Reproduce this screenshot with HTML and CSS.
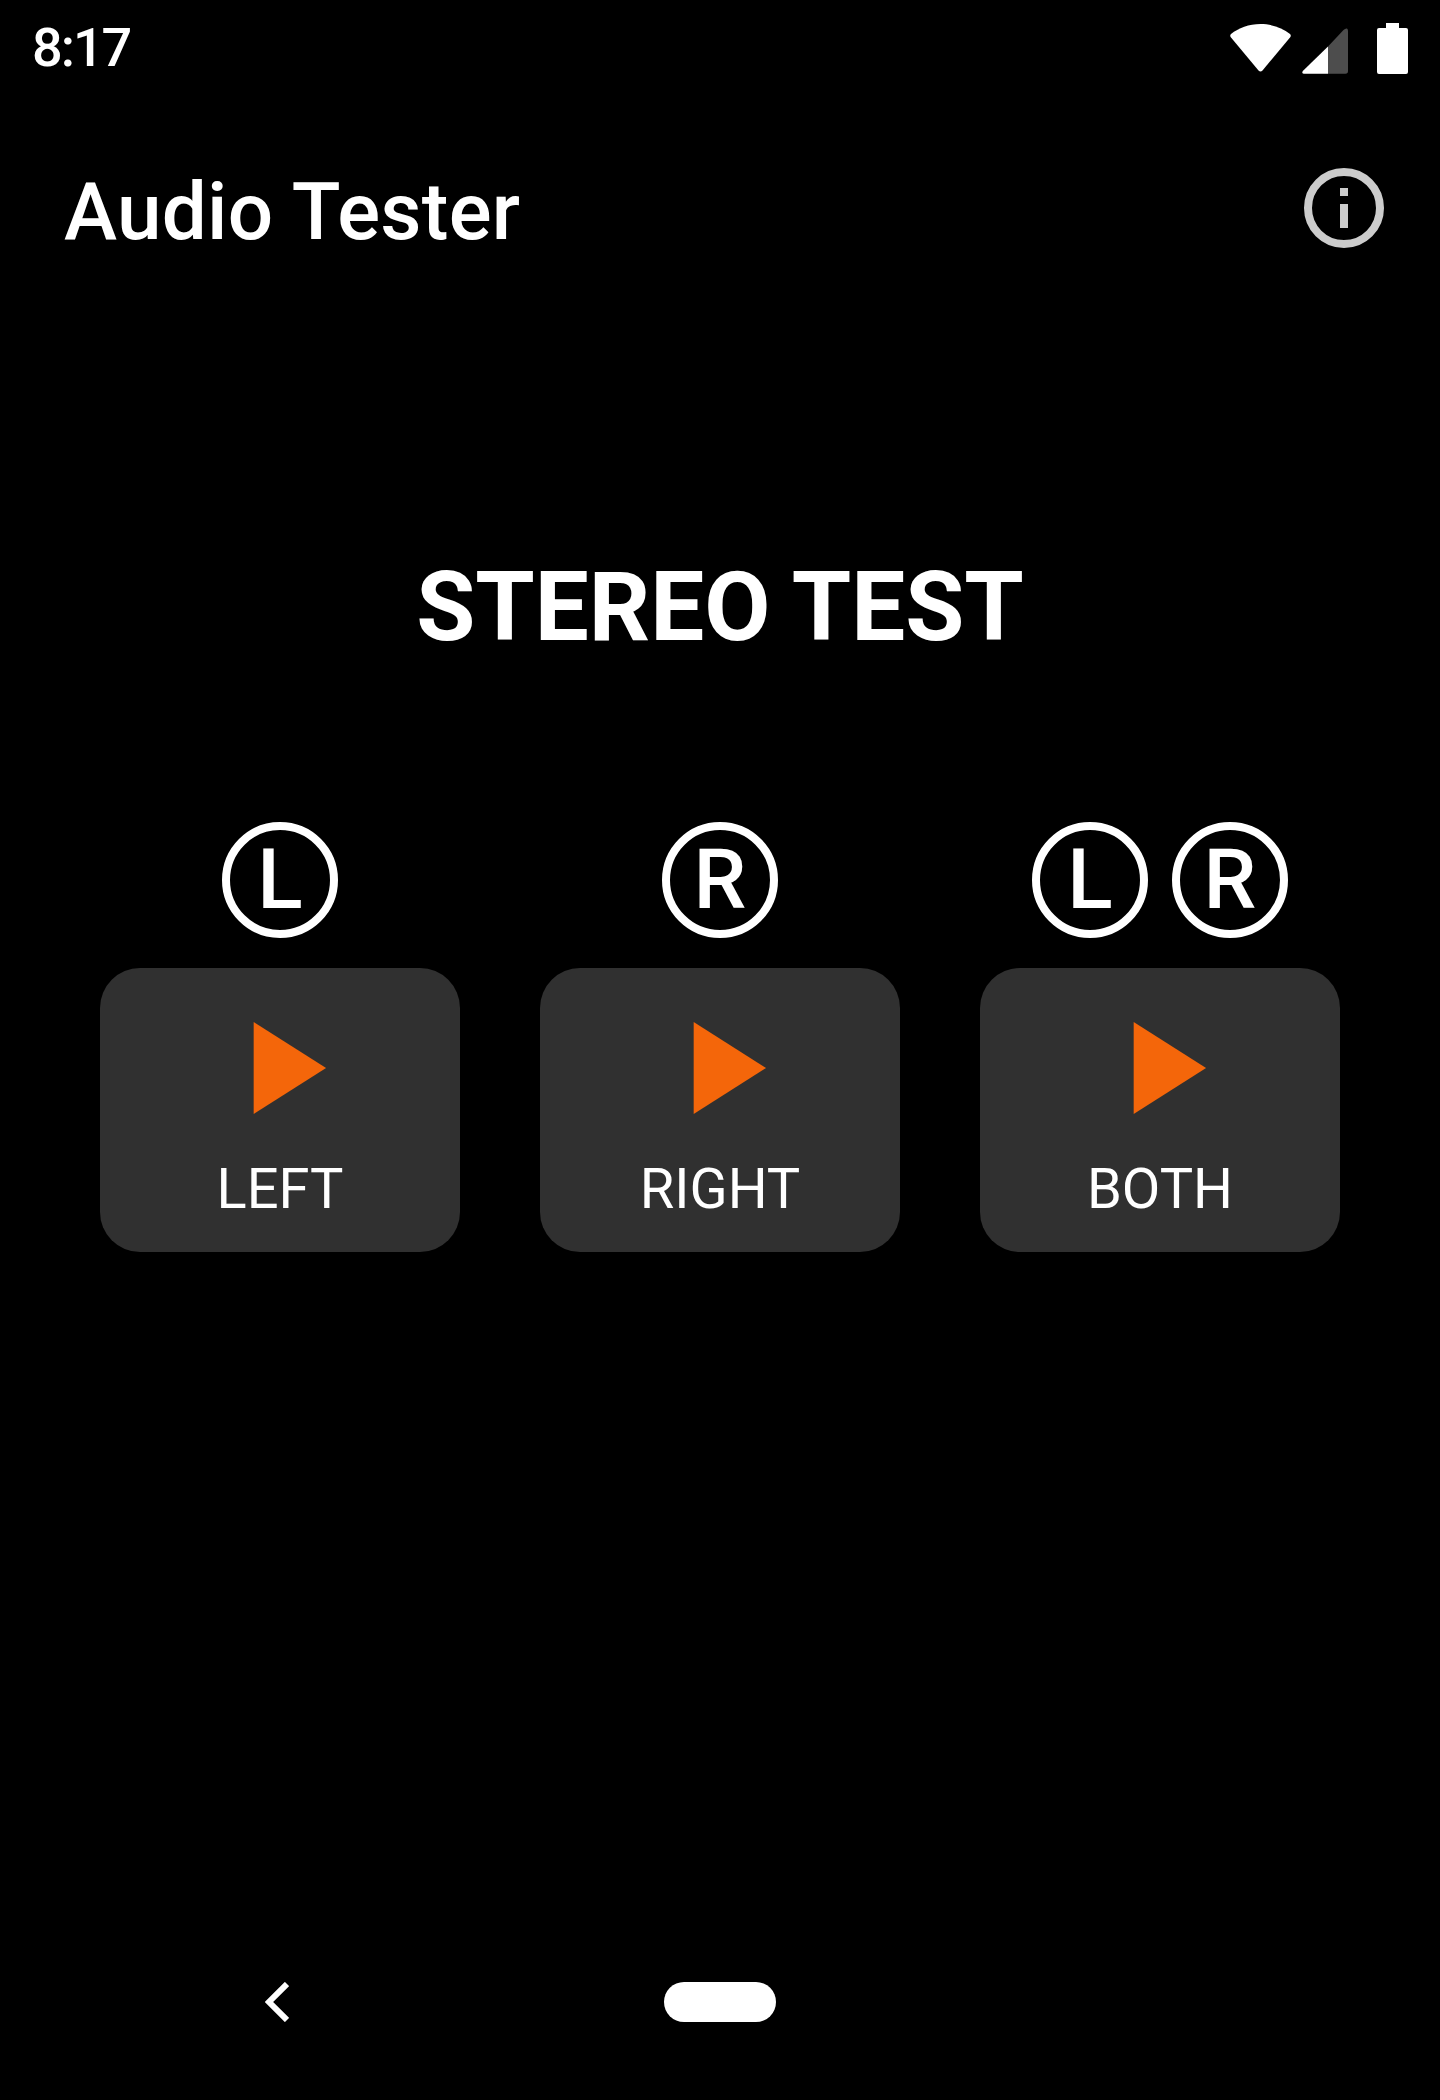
FILE: index.html
```html
<!DOCTYPE html>
<html lang="en">
<head>
    <meta charset="UTF-8">
    <meta name="viewport" content="width=device-width, initial-scale=1.0">
    <title>Audio Tester</title>
    <link rel="stylesheet" href="styles.css">
</head>
<body>

    <!-- Status bar -->
    <div class="status-bar">
        <span class="clock">8:17</span>
        <div class="status-icons">
            <svg class="icon-wifi" width="61" height="48" viewBox="0 0 61 48">
                <path fill="#fff" d="M30.500 0C19 0 8.500 4 1 10Q-.5 11.500 1 13.500L28.500 46.500Q30.500 48.500 32.500 46.500L60 13.500Q61.500 11.500 60 10C52.500 4 42 0 30.500 0Z"/>
            </svg>
            <svg class="icon-signal" width="46" height="46" viewBox="0 0 46 46">
                <path fill="#fff" d="M26 18.500L.8 43Q-.5 45.700 2 45.700H26Z"/>
                <path fill="#4d4d4d" d="M26 18.500L41.500 2Q43.500 0 45 .5Q46 1 46 3V43Q46 45.700 43.500 45.700H26Z"/>
            </svg>
            <svg class="icon-battery" width="31" height="51" viewBox="0 0 31 51">
                <path fill="#fff" d="M9 0H22V5H29Q31 5 31 7V49Q31 51 29 51H2Q0 51 0 49V7Q0 5 2 5H9Z"/>
            </svg>
        </div>
    </div>

    <!-- App bar -->
    <header class="app-bar">
        <h1 class="app-title">Audio Tester</h1>
        <svg class="icon-info" width="96" height="96" viewBox="0 0 24 24">
            <circle cx="12" cy="12" r="9" fill="none" stroke="#ccc" stroke-width="2"/>
            <path fill="#ccc" d="M11 7h2v2h-2zM11 11h2v6h-2z"/>
        </svg>
    </header>

    <main class="content">
        <h2 class="test-title">STEREO TEST</h2>

        <div class="channels">
            <div class="channel">
                <div class="badges">
                    <span class="badge">L</span>
                </div>
                <button class="play-card" type="button">
                    <svg class="icon-play" width="158" height="158" viewBox="0 0 24 24"><path d="M8 5v14l11-7z"/></svg>
                    <span class="play-label">LEFT</span>
                </button>
            </div>
            <div class="channel">
                <div class="badges">
                    <span class="badge">R</span>
                </div>
                <button class="play-card" type="button">
                    <svg class="icon-play" width="158" height="158" viewBox="0 0 24 24"><path d="M8 5v14l11-7z"/></svg>
                    <span class="play-label">RIGHT</span>
                </button>
            </div>
            <div class="channel">
                <div class="badges">
                    <span class="badge">L</span>
                    <span class="badge">R</span>
                </div>
                <button class="play-card" type="button">
                    <svg class="icon-play" width="158" height="158" viewBox="0 0 24 24"><path d="M8 5v14l11-7z"/></svg>
                    <span class="play-label">BOTH</span>
                </button>
            </div>
        </div>
    </main>

    <!-- Navigation bar -->
    <nav class="nav-bar">
        <svg class="nav-back" width="24" height="40" viewBox="0 0 24 40">
            <path fill="none" stroke="#fff" stroke-width="6" d="M22 2L4 20L22 38"/>
        </svg>
        <div class="nav-home"></div>
    </nav>

</body>
</html>
```

FILE: styles.css
```css
body {
    font-family: Roboto, "Liberation Sans", sans-serif;
    background-color: #000;
    color: #fff;
    margin: 0;
    height: 2100px;
    display: flex;
    flex-direction: column;
}
.status-bar {
    height: 96px;
    padding: 0 32px;
    box-sizing: border-box;
    display: flex;
    justify-content: space-between;
    align-items: center;
}
.clock {
    font-size: 54px;
    font-weight: 500;
    letter-spacing: -2px;
    line-height: 96px;
}
.status-icons {
    display: flex;
    align-items: flex-end;
}
.icon-wifi {
    margin-right: 11px;
    margin-bottom: 2px;
}
.icon-signal {
    margin-right: 29px;
}
.app-bar {
    height: 128px;
    margin-top: 48px;
    padding: 0 48px 0 64px;
    display: flex;
    justify-content: space-between;
    align-items: center;
}
.app-title {
    font-size: 80px;
    font-weight: 500;
    letter-spacing: 0.3px;
    margin: 8px 0 0;
}
.content {
    flex: 1;
}
.test-title {
    font-size: 96px;
    font-weight: 700;
    text-align: center;
    line-height: 112px;
    margin: 279px 0 0;
}
.channels {
    display: grid;
    grid-template-columns: repeat(3, 360px);
    column-gap: 80px;
    padding: 0 100px;
    margin-top: 159px;
}
.channel {
    display: flex;
    flex-direction: column;
    align-items: center;
}
.badges {
    display: flex;
    gap: 24px;
    margin-bottom: 30px;
}
.badge {
    width: 116px;
    height: 116px;
    box-sizing: border-box;
    border: 8px solid #fff;
    border-radius: 50%;
    display: flex;
    justify-content: center;
    align-items: center;
    font-size: 84px;
    font-weight: 500;
    line-height: 1;
}
.play-card {
    width: 360px;
    height: 284px;
    padding: 21px 0 0;
    border: none;
    border-radius: 40px;
    background-color: #303030;
    color: #fff;
    font-family: inherit;
    display: flex;
    flex-direction: column;
    align-items: center;
}
.icon-play {
    fill: #f4660a;
}
.play-label {
    font-size: 56px;
    line-height: 66px;
    margin-top: 9px;
}
.nav-bar {
    height: 118px;
    padding-left: 265px;
    display: flex;
    align-items: flex-start;
    gap: 375px;
}
.nav-home {
    width: 112px;
    height: 40px;
    border-radius: 20px;
    background-color: #fff;
}
```
